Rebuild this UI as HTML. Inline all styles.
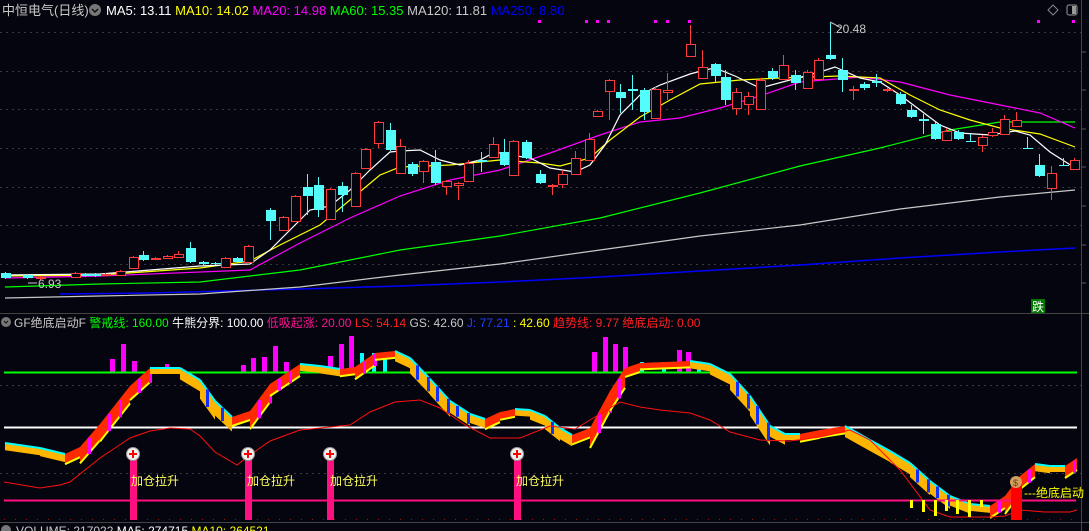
<!DOCTYPE html>
<html><head><meta charset="utf-8"><style>
html,body{margin:0;padding:0;background:#05050f;overflow:hidden}
svg{display:block}
text{font-family:"Liberation Sans","Noto Sans CJK SC",sans-serif}
</style></head><body>
<svg id="s" width="1089" height="531" viewBox="0 0 1089 531" xmlns="http://www.w3.org/2000/svg">
<rect width="1089" height="531" fill="#05050f"/>
<g stroke="#3a3a3a" stroke-dasharray="2,4" stroke-width="1">
<line x1="0" y1="32.5" x2="1081" y2="32.5"/><line x1="0" y1="71.5" x2="1081" y2="71.5"/>
<line x1="0" y1="109.5" x2="1081" y2="109.5"/><line x1="0" y1="148.5" x2="1081" y2="148.5"/>
<line x1="0" y1="187.5" x2="1081" y2="187.5"/><line x1="0" y1="225.5" x2="1081" y2="225.5"/>
<line x1="0" y1="264.5" x2="1081" y2="264.5"/>
<line x1="0" y1="385.5" x2="1081" y2="385.5"/><line x1="0" y1="473.5" x2="1081" y2="473.5"/>
</g>
<line x1="4" y1="519.5" x2="1077" y2="519.5" stroke="#a01010" stroke-dasharray="1,10"/>
<line x1="1081.5" y1="0" x2="1081.5" y2="531" stroke="#444"/>
<line x1="0" y1="313.5" x2="1089" y2="313.5" stroke="#444"/>
<line x1="0" y1="522.5" x2="1089" y2="522.5" stroke="#444"/>
<g stroke="#555"><line x1="1081" y1="52" x2="1086" y2="52"/><line x1="1081" y1="90" x2="1086" y2="90"/><line x1="1081" y1="129" x2="1086" y2="129"/><line x1="1081" y1="167" x2="1086" y2="167"/><line x1="1081" y1="206" x2="1086" y2="206"/><line x1="1081" y1="245" x2="1086" y2="245"/><line x1="1081" y1="283" x2="1086" y2="283"/></g>

<g fill="none" stroke-width="1.2">
<polyline stroke="#0000ff" stroke-width="1.5" points="60,294 150,293 300,289 400,286 500,282 600,277 700,271 800,265 900,258 1000,252 1075,248"/>
<polyline stroke="#c8c8c8" points="5,298 100,296 200,294 300,287 400,275 500,264 600,250 700,236 800,225 900,209 1000,197 1075,190"/>
<polyline stroke="#00ff00" points="5,287 100,284 200,282 300,270 400,250 500,236 600,218 700,193 800,166 880,148 950,130 1000,122 1075,122"/>
<polyline stroke="#ff00ff" points="5,278 100,276 250,270 300,243 350,218 400,196 450,180 500,170 550,153 600,135 640,122 680,118 720,108 760,96 800,82 860,77 900,82 950,95 1000,105 1040,113 1075,128"/>
<polyline stroke="#ffff00" points="5,276 100,275 200,268 250,261 280,245 320,225 350,200 380,175 400,167 450,165 500,160 540,163 560,166 590,158 610,140 640,117 670,100 700,84 740,80 780,78 840,76 880,78 910,95 940,110 970,120 1000,128 1040,134 1075,147"/>
<polyline stroke="#ffffff" points="5,275 100,274 200,266 250,264 270,250 290,230 310,210 330,206 350,190 370,170 390,152 400,151 420,150 440,160 460,165 480,160 495,152 510,155 530,158 550,168 575,172 590,165 605,145 620,115 640,95 660,85 690,74 705,70 715,68 735,76 760,88 790,80 820,72 835,67 860,78 880,82 900,95 920,110 940,125 960,133 990,135 1015,131 1030,135 1050,152 1072,166"/>
</g>
<g id="candles"></g>

<text x="836" y="33" fill="#c8c8c8" font-size="12">20.48</text>
<polyline points="830,22 834,24 841,28" fill="none" stroke="#c8c8c8"/>
<text x="38" y="288" fill="#c8c8c8" font-size="12">6.93</text>
<line x1="28" y1="283" x2="37" y2="283" stroke="#c8c8c8"/>
<rect x="1031" y="299" width="14" height="14" fill="#007800"/>
<text x="1032" y="311" fill="#fff" font-size="12">跌</text>

<g fill="#ff00ff"><rect x="538" y="20" width="3" height="3"/><rect x="585" y="20" width="3" height="3"/><rect x="596" y="20" width="3" height="3"/><rect x="607" y="20" width="3" height="3"/><rect x="654" y="20" width="3" height="3"/><rect x="666" y="20" width="3" height="3"/><rect x="688" y="20" width="3" height="3"/><rect x="1037" y="20" width="3" height="3"/><rect x="1072" y="20" width="3" height="3"/></g>
<path d="M1053,5 L1058,10 L1053,15 L1048,10 Z" fill="none" stroke="#888"/>
<rect x="1067" y="5" width="10" height="10" rx="2" fill="none" stroke="#999"/><rect x="1072" y="6" width="4" height="8" fill="#999"/>

<rect x="0" y="0" width="535" height="21" fill="#05050f"/>
<text x="2" y="15" fill="#c8c8c8" font-size="13">中恒电气(日线)</text>
<circle cx="95" cy="10" r="6" fill="#777"/><path d="M92,9 L95,12 L98,9" stroke="#111" stroke-width="1.5" fill="none"/>
<text x="106" y="15" font-size="13"><tspan fill="#fff">MA5: 13.11 </tspan><tspan fill="#ffff00"> MA10: 14.02 </tspan><tspan fill="#ff00ff"> MA20: 14.98 </tspan><tspan fill="#00ff00"> MA60: 15.35 </tspan><tspan fill="#c8c8c8"> MA120: 11.81 </tspan><tspan fill="#0000ff"> MA250: 8.80</tspan></text>

<circle cx="6" cy="322" r="5" fill="#777"/><path d="M4,321 L6,323 L8,321" stroke="#111" fill="none"/>
<text x="14" y="327" font-size="12"><tspan fill="#c8c8c8">GF绝底启动F </tspan><tspan fill="#00ff00"> 警戒线: 160.00 </tspan><tspan fill="#fff"> 牛熊分界: 100.00 </tspan><tspan fill="#ff1493"> 低吸起涨: 20.00 </tspan><tspan fill="#ff2020"> LS: 54.14 </tspan><tspan fill="#c8c8c8"> GS: 42.60 </tspan><tspan fill="#2040ff"> J: 77.21 </tspan><tspan fill="#ffff00"> : 42.60 </tspan><tspan fill="#ff2020"> 趋势线: 9.77 </tspan><tspan fill="#ff2020"> 绝底启动: 0.00</tspan></text>

<g fill="#ff00ff">
<rect x="110" y="359" width="5" height="13"/><rect x="121" y="344" width="5" height="28"/><rect x="132" y="361" width="5" height="11"/><rect x="165" y="364" width="4" height="8"/>
<rect x="241" y="365" width="5" height="7"/><rect x="251" y="358" width="5" height="14"/><rect x="262" y="357" width="5" height="15"/><rect x="273" y="346" width="5" height="26"/><rect x="284" y="362" width="5" height="10"/>
<rect x="328" y="356" width="5" height="16"/><rect x="339" y="344" width="5" height="28"/><rect x="349" y="336" width="5" height="36"/>
<rect x="592" y="352" width="5" height="20"/><rect x="603" y="337" width="5" height="35"/><rect x="613" y="344" width="5" height="28"/><rect x="623" y="347" width="5" height="25"/>
<rect x="677" y="350" width="5" height="22"/><rect x="686" y="352" width="5" height="20"/>
</g>
<g fill="#00ffff"><rect x="360" y="353" width="4" height="19"/><rect x="372" y="353" width="4" height="19"/><rect x="383" y="353" width="4" height="19"/><rect x="640" y="362" width="4" height="10"/><rect x="662" y="362" width="4" height="10"/><rect x="697" y="362" width="4" height="10"/></g>

<line x1="4" y1="372.5" x2="1077" y2="372.5" stroke="#00ff00" stroke-width="2"/>
<line x1="4" y1="427.5" x2="1077" y2="427.5" stroke="#ffffff" stroke-width="2"/>

<g id="band"></g>

<polyline fill="none" stroke="#ff1010" stroke-width="1" points="4,482 28,486 40,488 60,485 70,482 100,458 130,438 150,431 170,428 190,429 200,436 215,452 237,465 250,455 270,441 300,430 330,427 350,425 370,412 395,402 420,400 440,408 465,425 490,438 520,438 550,426 575,429 590,420 620,402 640,407 660,410 690,413 710,420 730,432 760,440 790,441 820,437 850,430 870,440 900,470 930,510 950,517 990,517 1005,516 1020,510 1045,512 1070,512 1077,510"/>

<line x1="4" y1="500.5" x2="1076" y2="500.5" stroke="#ff1080" stroke-width="2"/>
<g fill="#ffff00"><rect x="910" y="500" width="3" height="8"/><rect x="922" y="500" width="3" height="12"/><rect x="934" y="500" width="3" height="16"/><rect x="945" y="500" width="3" height="11"/><rect x="956" y="500" width="3" height="14"/><rect x="968" y="500" width="3" height="17"/><rect x="980" y="500" width="3" height="7"/></g>
<rect x="1011" y="480" width="11" height="40" fill="#ff0000"/>
<circle cx="1016" cy="482" r="6" fill="#d0a060"/><text x="1013" y="486" font-size="9" fill="#7a3a00">$</text>
<text x="1024" y="497" font-size="12" fill="#ffff00">---绝底启动</text>

<g>
<rect x="130" y="458" width="7" height="62" fill="#ff1080"/><rect x="245" y="458" width="7" height="62" fill="#ff1080"/><rect x="327" y="458" width="7" height="62" fill="#ff1080"/><rect x="514" y="458" width="7" height="62" fill="#ff1080"/>
<g fill="#eee" stroke="#999"><circle cx="133" cy="454" r="6.5"/><circle cx="248" cy="454" r="6.5"/><circle cx="330" cy="454" r="6.5"/><circle cx="517" cy="454" r="6.5"/></g>
<g stroke="#f00" stroke-width="2"><path d="M129,454h8M133,450v8"/><path d="M244,454h8M248,450v8"/><path d="M326,454h8M330,450v8"/><path d="M513,454h8M517,450v8"/></g>
<g fill="#ffff60" font-size="12"><text x="131" y="485">加仓拉升</text><text x="247" y="485">加仓拉升</text><text x="330" y="485">加仓拉升</text><text x="516" y="485">加仓拉升</text></g>
</g>

<circle cx="6" cy="530" r="5" fill="#777"/>
<text x="16" y="535" font-size="12"><tspan fill="#c8c8c8">VOLUME: 217022 </tspan><tspan fill="#fff"> MA5: 274715 </tspan><tspan fill="#ffff00"> MA10: 264521</tspan></text>
</svg>
<script>
var d=[
[5,273,278,272,279,0],[27,275,278,274,279,0],[40,278,277,276,280,1],[75,277,273,272,278,1],[85,274,276,273,277,0],[95,274,276,273,277,0],[105,275,274,273,276,1],[120,275,271,270,276,1],
[133,268,257,256,269,1],[143,255,260,251,261,0],[155,259,258,257,260,1],[167,258,256,255,259,1],[178,257,254,251,258,1],[190,248,262,242,263,0],[203,262,264,261,265,0],[215,263,264,262,265,0],
[225,267,258,257,268,1],[237,258,262,257,263,0],[248,262,246,245,263,1],[270,210,221,208,240,0],[283,230,217,216,231,1],[295,221,196,195,222,1],[307,187,196,174,215,0],[318,185,210,177,217,0],
[330,219,189,188,220,1],[342,186,195,182,212,0],[355,206,173,172,207,1],[365,168,149,148,169,1],[378,143,122,121,148,1],[390,130,150,123,151,0],[400,173,146,139,174,1],[412,164,174,162,176,0],
[423,171,161,160,183,1],[435,162,183,150,185,0],[446,186,181,180,195,1],[458,185,183,182,200,1],[468,181,163,160,182,1],[481,160,162,152,172,0],[493,157,144,137,158,1],[504,152,165,139,166,0],
[513,175,141,140,176,1],[526,142,158,140,159,0],[540,174,183,170,184,0],[552,186,185,184,195,1],[562,184,174,170,188,1],[575,174,158,151,175,1],[589,160,139,133,161,1],[597,116,111,110,117,1],
[609,91,80,79,120,1],[620,92,98,84,113,0],[632,89,91,75,110,0],[644,90,112,88,120,0],[655,118,89,87,119,1],[667,92,90,73,100,1],[690,56,44,25,57,1],[702,78,67,50,79,1],
[715,64,76,63,82,0],[725,77,100,70,105,0],[736,108,92,88,115,1],[748,104,96,92,115,1],[760,109,80,78,110,1],[772,71,78,68,80,0],[783,79,65,55,80,1],[795,75,83,70,90,0],
[807,88,72,70,89,1],[818,79,60,58,80,1],[830,55,59,23,60,0],[842,70,80,58,92,0],[853,90,89,86,100,1],[864,84,88,82,90,0],[876,81,83,74,87,0],[887,90,89,88,92,1],
[900,94,104,92,105,0],[911,110,117,105,118,0],[923,119,121,114,134,0],[935,124,139,122,140,0],[946,140,131,128,141,1],[958,132,139,130,140,0],[970,141,142,134,142,0],[982,145,137,135,152,1],
[992,135,132,128,137,1],[1004,134,119,115,135,1],[1016,126,120,112,127,1],[1027,148,149,137,149,0],[1039,165,176,154,177,0],[1051,188,173,166,200,1],[1063,165,166,158,166,0],[1074,169,160,158,170,1]];
var g=document.getElementById('candles'),h='';
d.forEach(function(c){var x=c[0],o=c[1],cl=c[2],hi=c[3],lo=c[4],up=c[5];var col=up?'#ff3b3b':'#54fcfc';var t=Math.min(o,cl),b=Math.max(o,cl);if(b-t<1)b=t+1;
h+='<line x1="'+(x+.5)+'" y1="'+hi+'" x2="'+(x+.5)+'" y2="'+lo+'" stroke="'+col+'"/>';
if(up)h+='<rect x="'+(x-4)+'.5" y="'+t+'.5" width="9" height="'+(b-t)+'" fill="#05050f" stroke="'+col+'"/>';
else h+='<rect x="'+(x-4)+'" y="'+t+'" width="10" height="'+(b-t)+'" fill="'+col+'"/>';});
g.innerHTML=h;
var P=[[5,443],[40,448],[65,454],[80,447],[100,424],[130,386],[150,368],[180,368],[200,380],[215,401],[232,417],[250,411],[270,384],[300,364],[320,366],[340,369],[355,367],[375,353],[395,351],[410,358],[430,379],[450,401],[470,414],[485,419],[500,412],[515,409],[530,410],[545,416],[560,428],[572,435],[590,428],[610,391],[625,368],[640,363],[690,361],[710,364],[730,374],[750,396],[770,426],[785,434],[800,434],[820,430],[845,426],[870,440],[890,451],[910,463],[930,481],[950,496],[970,504],[990,506],[1005,496],[1020,476],[1035,464],[1050,466],[1065,466],[1077,458]];
var bh='';
for(var i=0;i<P.length-1;i++){var a=P[i],b=P[i+1];var sl=(b[1]-a[1])/(b[0]-a[0]);var th=6+Math.min(14,Math.abs(sl)*9);
var rising=b[1]<a[1]-1;var fill=rising?'#ff2a00':'#ffb400';
bh+='<polygon points="'+a[0]+','+a[1]+' '+b[0]+','+b[1]+' '+b[0]+','+(b[1]+th)+' '+a[0]+','+(a[1]+th)+'" fill="'+fill+'"/>';
if(rising){
bh+='<line x1="'+a[0]+'" y1="'+(a[1]+th)+'" x2="'+b[0]+'" y2="'+(b[1]+th)+'" stroke="#ffff00" stroke-width="2"/>';
if(Math.abs(sl)>0.6){for(var x=a[0]+8;x<b[0];x+=11){var y=a[1]+sl*(x-a[0]);bh+='<rect x="'+x+'" y="'+y+'" width="3" height="'+th+'" fill="#ff00ff"/>';}}
}else{
bh+='<line x1="'+a[0]+'" y1="'+a[1]+'" x2="'+b[0]+'" y2="'+b[1]+'" stroke="#00ffff" stroke-width="2"/>';
if(sl>0.6){for(var x=a[0]+6;x<b[0];x+=11){var y=a[1]+sl*(x-a[0]);bh+='<rect x="'+x+'" y="'+(y+1)+'" width="3" height="'+(th-1)+'" fill="#1030ff"/>';}}
}}
document.getElementById('band').innerHTML=bh;
</script>
</body></html>
